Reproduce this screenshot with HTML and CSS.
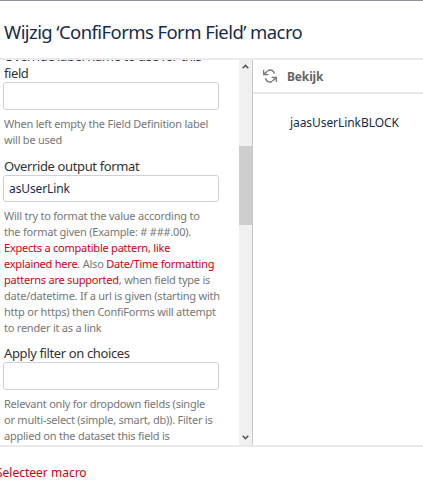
FILE: index.html
```
<!DOCTYPE html>
<html lang="nl">
<head>
  <meta charset="utf-8">
  <meta name="viewport" content="width=device-width, initial-scale=1.0">
  <title>Wijzig macro</title>
  <link rel="stylesheet" href="styles.css">
</head>

<body>
  <div class="dialog">
    <header class="dialog-header">
      <h2>Wijzig ‘ConfiForms Form Field’ macro</h2>
    </header>
    <main class="dialog-body">
      <form class="params">
        <div class="field">
          <label class="two-line" for="label-name">Override label name to use for this<br>field</label>
          <input id="label-name" type="text">
          <p>When left empty the Field Definition label<br>will be used</p>
        </div>
        <div class="field output">
          <label for="output-format">Override output format</label>
          <input id="output-format" type="text" value="asUserLink">
          <p>Will try to format the value according to<br>the format given (Example: # ###.00).<br><a>Expects a compatible pattern, like<br>explained here</a>. Also <a>Date/Time formatting<br>patterns are supported</a>, when field type is<br>date/datetime. If a url is given (starting with<br>http or https) then ConfiForms will attempt<br>to render it as a link</p>
        </div>
        <div class="field">
          <label for="filter">Apply filter on choices</label>
          <input id="filter" type="text">
          <p>Relevant only for dropdown fields (single<br>or multi-select (simple, smart, db)). Filter is<br>applied on the dataset this field is</p>
        </div>
      </form>
      <div class="scrollbar">
        <svg width="7" height="5" viewBox="0 0 7 5"><path d="M.7 4.2 3.5 1.4 6.3 4.2"/></svg>
        <div class="thumb"></div>
        <svg class="down" width="7" height="5" viewBox="0 0 7 5"><path d="M.7 .8 3.5 3.6 6.3 .8"/></svg>
      </div>
      <section class="preview">
        <div class="preview-header">
          <svg class="refresh" width="14" height="14" viewBox="0 0 14 14">
            <path class="arc" d="M4.8 1.7C8 -.1 10.8 1.6 11.3 4.6M9.2 12.3C6 14.1 3.2 12.4 2.7 9.4"/>
            <path class="tip" d="M0 1H1.3V4L4 1.5 5 2.5 2.4 5H5.5V6.3H0ZM14 13H12.7V10L10 12.5 9 11.5 11.6 9H8.5V7.7H14Z"/>
          </svg>
          <span>Bekijk</span>
        </div>
        <div class="preview-content">jaasUserLinkBLOCK</div>
      </section>
    </main>
    <footer class="dialog-footer">
      <a>Selecteer macro</a>
    </footer>
  </div>
</body>
</html>
```
FILE: styles.css
```
* {
  box-sizing: border-box;
}
body, html {
  height: 100%;
  margin: 0;
  overflow: hidden;
  background: #fff;
  color: #333;
  font-family: "Noto Sans", "Open Sans", sans-serif;
}
.dialog {
  display: flex;
  flex-direction: column;
  height: 485px;
  border-top: 1px solid #8d93a8;
}
.dialog-header {
  height: 59px;
  padding: 17px 0 0 4px;
  border-bottom: 2px solid #e9eaed;
}
.dialog-header h2 {
  margin: 0;
  color: #172b4d;
  font-size: 18.5px;
  font-weight: 400;
  line-height: 28px;
  letter-spacing: -0.58px;
  white-space: nowrap;
}
.dialog-body {
  display: flex;
  height: 387px;
  border-bottom: 2px solid #e9eaee;
  overflow: hidden;
}

/* parameters, scrolled part way down */
.params {
  width: 239px;
  margin-top: -12px;
  padding-left: 3px;
  white-space: nowrap;
}
.field {
  margin-bottom: 9px;
}
.field label {
  display: block;
  padding-left: 1px;
  font-size: 13px;
  line-height: 17px;
  letter-spacing: -0.37px;
}
.field .two-line {
  letter-spacing: -0.42px;
}
.field input {
  display: block;
  width: 216px;
  height: 28px;
  margin: 0;
  padding: 0 5px;
  border: 1px solid #cdd0da;
  border-radius: 3px;
  background: #fff;
  color: #172b4d;
  font: 12px "Noto Sans", "Open Sans", sans-serif;
  letter-spacing: -0.1px;
  outline: none;
}
.field.output {
  margin-top: 10px;
}
.field.output input {
  height: 27px;
}
.field p {
  margin: 6px 0 0;
  padding-left: 1px;
  color: #777;
  font-size: 11px;
  line-height: 16px;
  letter-spacing: -0.23px;
}
a {
  color: #d00012;
}

.scrollbar {
  display: flex;
  flex-direction: column;
  align-items: center;
  width: 13px;
  padding-top: 4px;
  background: #f0f0f0;
}
.scrollbar path {
  fill: none;
  stroke: #555;
  stroke-width: 1.5;
}
.thumb {
  width: 13px;
  height: 79px;
  margin-top: 77px;
  background: #cdcdcd;
}
.down {
  margin: auto 0 5px;
}

.preview {
  flex: 1;
  border-left: 1px solid #c9c9c9;
}
.preview-header {
  display: flex;
  align-items: center;
  height: 34px;
  padding-left: 10px;
  border-bottom: 2px solid #e7e7e7;
  color: #666;
  font-size: 12px;
  font-weight: 700;
}
.preview-header span {
  margin-left: 10px;
  letter-spacing: -0.15px;
}
.arc {
  fill: none;
  stroke: #777;
  stroke-width: 1.5;
}
.tip {
  fill: #777;
}
.preview-content {
  padding: 20px 0 0 37px;
  color: #172b4d;
  font-size: 12px;
  line-height: 18px;
  letter-spacing: -0.07px;
}

.dialog-footer {
  padding-top: 17px;
  margin-left: -4px;
  font-size: 12px;
  line-height: 18px;
}
```
